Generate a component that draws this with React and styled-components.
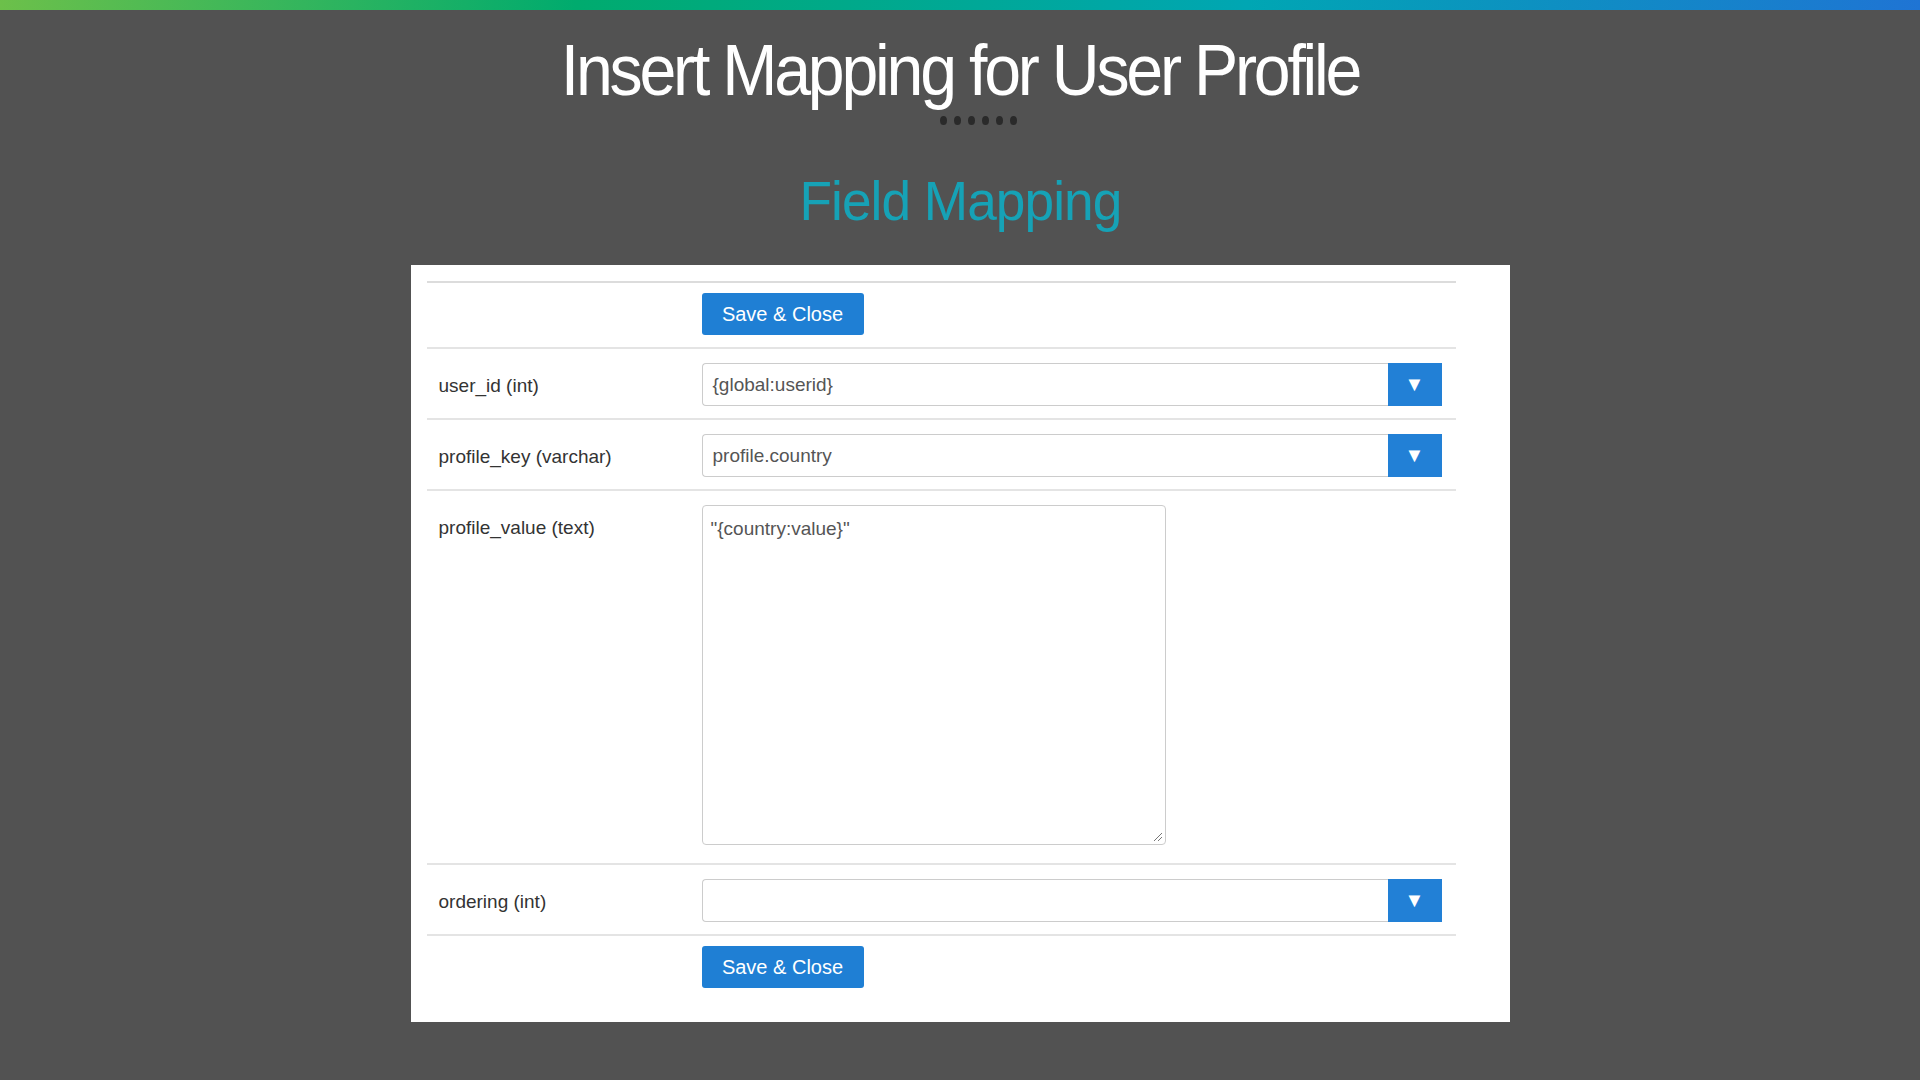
import styled, { createGlobalStyle } from 'styled-components'

const GlobalStyle = createGlobalStyle`
  * { box-sizing: border-box; margin: 0; padding: 0; }
  html, body { width: 100%; height: 100%; background: #525252; font-family: 'Liberation Sans', Arial, sans-serif; }
`

const Page = styled.div`
  width: 1920px;
  height: 1080px;
  background: #525252;
  display: flex;
  flex-direction: column;
  align-items: center;
`

const TopBar = styled.div`
  width: 100%;
  height: 10px;
  background: linear-gradient(to right, #6cc04a, #00ab6e 30%, #00a6b3 65%, #1f74d4);
`

const Title = styled.h1`
  margin-top: 24px;
  font-size: 72px;
  font-weight: 400;
  letter-spacing: -3.5px;
  color: #fff;
  line-height: 1;
  transform: scaleX(0.92);
`

const Dots = styled.div`
  display: flex;
  gap: 7px;
  margin-top: 10px;
  margin-left: 36px;
  span {
    width: 7px;
    height: 9px;
    border-radius: 50%;
    background: #2a2a2a;
  }
`

const Subtitle = styled.h2`
  margin-top: 48px;
  font-size: 56px;
  font-weight: 400;
  color: #16a2b6;
  letter-spacing: -1px;
  line-height: 1;
  transform: scaleX(0.95);
`

const Panel = styled.div`
  margin-top: 36px;
  width: 1099px;
  background: #fff;
  padding: 16px 54px 22px 16px;
`

const Row = styled.div`
  display: flex;
  border-top: 2px solid ${p => (p.$strong ? '#dcdcdc' : '#e4e4e4')};
  padding: ${p => (p.$btn ? '10px 0 12px' : '14px 14px 12px 0')};
`

const Label = styled.div`
  width: 275px;
  padding-left: 12px;
  padding-top: 12px;
  font-size: 19px;
  color: #333;
`

const Field = styled.div`
  flex: 1;
  display: flex;
`

const Button = styled.button`
  margin-left: 275px;
  width: 162px;
  height: 42px;
  border: none;
  border-radius: 3px;
  background: #1f7fd4;
  color: #fff;
  font-family: 'Liberation Sans', Arial, sans-serif;
  font-size: 20px;
`

const Input = styled.div`
  flex: 1;
  height: 43px;
  border: 1px solid #ccc;
  border-right: none;
  border-radius: 4px 0 0 4px;
  padding: 0 10px;
  display: flex;
  align-items: center;
  font-size: 19px;
  color: #555;
`

const Caret = styled.div`
  width: 54px;
  height: 43px;
  background: #2280d6;
  color: #fff;
  display: flex;
  align-items: center;
  justify-content: center;
  font-size: 20px;
`

const TextArea = styled.div`
  position: relative;
  width: 464px;
  height: 340px;
  border: 1px solid #ccc;
  border-radius: 4px;
  padding: 12px 8px;
  font-size: 19px;
  color: #555;
`

const Grip = styled.svg`
  position: absolute;
  right: 2px;
  bottom: 2px;
`

const Select = ({ value }) => (
  <Field>
    <Input>{value}</Input>
    <Caret>▼</Caret>
  </Field>
)

export default function App() {
  return (
    <>
      <GlobalStyle />
      <Page>
        <TopBar />
        <Title>Insert Mapping for User Profile</Title>
        <Dots>{[0, 1, 2, 3, 4, 5].map(i => <span key={i} />)}</Dots>
        <Subtitle>Field Mapping</Subtitle>
        <Panel>
          <Row $btn $strong><Button>Save &amp; Close</Button></Row>
          <Row><Label>user_id (int)</Label><Select value='{global:userid}' /></Row>
          <Row><Label>profile_key (varchar)</Label><Select value='profile.country' /></Row>
          <Row>
            <Label>profile_value (text)</Label>
            <Field>
              <TextArea>
                "{'{country:value}'}"
                <Grip width='12' height='12' viewBox='0 0 12 12'>
                  <path d='M11 3 L3 11 M11 7 L7 11' stroke='#777' strokeWidth='1' />
                </Grip>
              </TextArea>
            </Field>
          </Row>
          <Row style={{ marginTop: 6 }}><Label>ordering (int)</Label><Select value='' /></Row>
          <Row $btn><Button>Save &amp; Close</Button></Row>
        </Panel>
      </Page>
    </>
  )
}
